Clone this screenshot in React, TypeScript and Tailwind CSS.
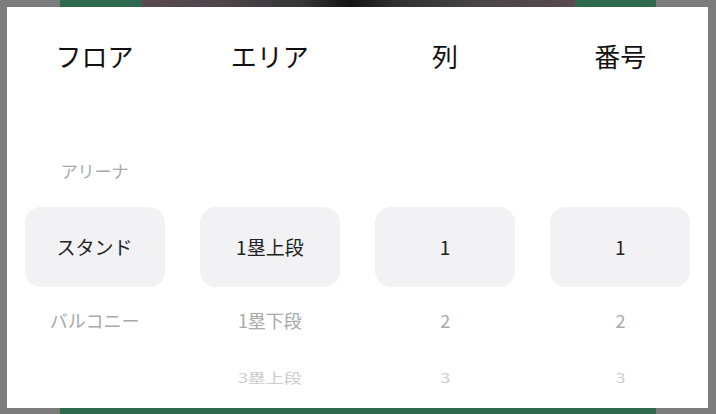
import React from 'react';

interface PickerColumn {
  title: string;
  above: string;
  selected: string;
  below: string;
  far: string;
}

const columns: PickerColumn[] = [
  { title: 'フロア', above: 'アリーナ', selected: 'スタンド', below: 'バルコニー', far: '' },
  { title: 'エリア', above: '', selected: '1塁上段', below: '1塁下段', far: '3塁上段' },
  { title: '列', above: '', selected: '1', below: '2', far: '3' },
  { title: '番号', above: '', selected: '1', below: '2', far: '3' },
];

function Column({ col }: { col: PickerColumn }) {
  return (
    <div className="flex-1 flex flex-col items-center">
      <div className="pt-[35px] h-[63px] text-[26px] leading-[28px] text-[#111]">{col.title}</div>
      <div className="mt-[65px] h-[72px] w-full flex items-center justify-center text-[17px] text-[#a9a9a9]">
        {col.above}
      </div>
      <div className="h-[80px] w-[140px] rounded-2xl bg-[#f2f2f4] flex items-center justify-center text-[19px] text-[#222]">
        {col.selected}
      </div>
      <div className="h-[66px] w-full flex items-center justify-center text-[18px] text-[#a9a9a9]">
        {col.below}
      </div>
      <div className="h-[48px] w-full flex items-center justify-center text-[18px] text-[#cdcdcd]">
        <span className="scale-y-75">{col.far}</span>
      </div>
    </div>
  );
}

export default function App() {
  return (
    <div
      className="w-[716px] h-[414px] bg-[#7c7c7c] flex flex-col overflow-hidden"
      style={{ fontFamily: '"Noto Sans CJK JP", "Noto Sans", sans-serif' }}
    >
      <div className="h-[7px] flex shrink-0">
        <div className="w-[60px]" />
        <div className="w-[82px] bg-[#2f6a4e]" />
        <div className="w-[433px] bg-[linear-gradient(90deg,#5a4a50_0%,#4d4549_20%,#333335_38%,#141414_48%,#2e2e30_58%,#4a4547_78%,#5a4a50_100%)]" />
        <div className="w-[81px] bg-[#2f6a4e]" />
      </div>
      <div className="flex px-[7px] shrink-0">
        <div className="w-[701px] h-[401px] bg-white flex">
          {columns.map((col) => (
            <Column key={col.title} col={col} />
          ))}
        </div>
      </div>
      <div className="flex-1 flex">
        <div className="w-[60px]" />
        <div className="w-[596px] bg-[#2f6a4e]" />
      </div>
    </div>
  );
}
